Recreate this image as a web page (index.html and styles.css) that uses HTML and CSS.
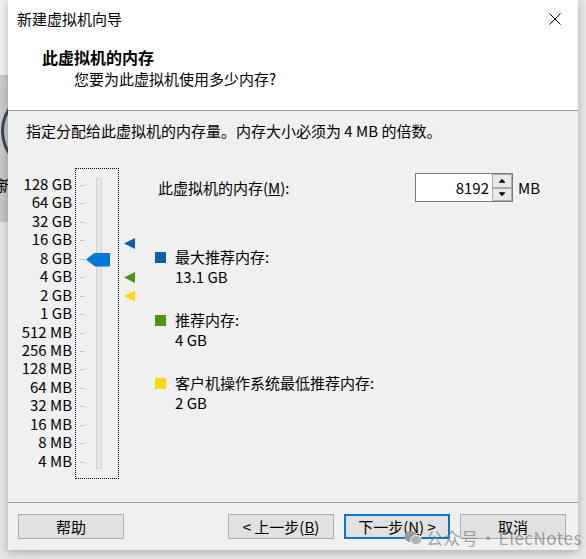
FILE: index.html
```html
<!DOCTYPE html>
<html lang="zh-CN">
<head>
  <meta charset="UTF-8">
  <title>新建虚拟机向导</title>
  <link rel="stylesheet" href="styles.css">
</head>
<body>
  <div class="behind">
    <span class="behind-ring"></span>
    <span class="behind-text">新</span>
  </div>

  <div class="dialog">
    <div class="top">
      <div class="titlebar">
        <span class="title">新建虚拟机向导</span>
        <svg class="close" width="12" height="12" viewBox="0 0 12 12">
          <path d="M0.5 0.5 L11.5 11.5 M11.5 0.5 L0.5 11.5" stroke="#000" stroke-width="1" fill="none"/>
        </svg>
      </div>
      <div class="header">
        <h1>此虚拟机的内存</h1>
        <p>您要为此虚拟机使用多少内存?</p>
      </div>
    </div>

    <div class="content">
      <p class="hint">指定分配给此虚拟机的内存量。内存大小必须为 4 MB 的倍数。</p>
      <div class="main">
        <div class="scale">
          <ul class="labels">
            <li>128 GB</li><li>64 GB</li><li>32 GB</li><li>16 GB</li>
            <li>8 GB</li><li>4 GB</li><li>2 GB</li><li>1 GB</li>
            <li>512 MB</li><li>256 MB</li><li>128 MB</li><li>64 MB</li>
            <li>32 MB</li><li>16 MB</li><li>8 MB</li><li>4 MB</li>
          </ul>
          <div class="slider">
            <ul class="ticks">
              <li></li><li></li><li></li><li></li><li></li><li></li><li></li><li></li>
              <li></li><li></li><li></li><li></li><li></li><li></li><li></li><li></li>
            </ul>
            <div class="track"></div>
            <div class="thumb" style="top: 83.5px"></div>
          </div>
          <div class="markers">
            <span class="marker marker-max" style="top: 70px"></span>
            <span class="marker marker-rec" style="top: 104px"></span>
            <span class="marker marker-min" style="top: 122.5px"></span>
          </div>
        </div>

        <div class="info">
          <div class="mem-row">
            <label class="mem-label">此虚拟机的内存(<u>M</u>):</label>
            <div class="spin">
              <input class="spin-value" value="8192">
              <div class="spin-btns">
                <span class="spin-btn"><i class="arrow-up"></i></span>
                <span class="spin-btn"><i class="arrow-down"></i></span>
              </div>
            </div>
            <span class="unit">MB</span>
          </div>

          <div class="legend">
            <div class="item">
              <i class="sq sq-max"></i>
              <div class="item-text">
                <div>最大推荐内存:</div>
                <div>13.1 GB</div>
              </div>
            </div>
            <div class="item">
              <i class="sq sq-rec"></i>
              <div class="item-text">
                <div>推荐内存:</div>
                <div>4 GB</div>
              </div>
            </div>
            <div class="item">
              <i class="sq sq-min"></i>
              <div class="item-text">
                <div>客户机操作系统最低推荐内存:</div>
                <div>2 GB</div>
              </div>
            </div>
          </div>
        </div>
      </div>
    </div>

    <div class="footer">
      <button class="btn">帮助</button>
      <div class="nav">
        <button class="btn">&lt; 上一步(<u>B</u>)</button>
        <button class="btn btn-default">下一步(<u>N</u>) &gt;</button>
        <button class="btn">取消</button>
      </div>
    </div>

    <div class="watermark">
      <svg width="18" height="16" viewBox="0 0 18 16">
        <ellipse cx="7" cy="6.5" rx="6.5" ry="5.5" fill="#9a9a9a"/>
        <ellipse cx="12" cy="10" rx="5.5" ry="4.6" fill="#b5b5b5" stroke="#f0f0f0" stroke-width="1"/>
      </svg>
      <span>公众号 · ElecNotes</span>
    </div>
  </div>
</body>
</html>
```

FILE: styles.css
```css
* { box-sizing: border-box; }

body {
  margin: 0;
  height: 559px;
  overflow: hidden;
  position: relative;
  background: #e9e9e9;
  font-family: "Noto Sans CJK SC", "Noto Sans", sans-serif;
  font-size: 15px;
  color: #000;
}

/* window behind the dialog, only a strip shows */
.behind {
  position: absolute;
  left: 0;
  top: 0;
  width: 40px;
  height: 559px;
  overflow: hidden;
  background: linear-gradient(#f3f3f3 0, #f3f3f3 75px, #cdcdcd 75px, #c6c6c6 222px, #e7e7e7 222px);
}
.behind-ring {
  position: absolute;
  left: 1px;
  top: 90px;
  width: 82px;
  height: 82px;
  border: 3px solid #3c4858;
  border-radius: 50%;
}
.behind-text {
  position: absolute;
  left: -3px;
  top: 175px;
  line-height: 20px;
}

.dialog {
  position: relative;
  z-index: 1;
  margin-left: 8px;
  width: 570px;
  height: 550px;
  background: #f0f0f0;
  display: flex;
  flex-direction: column;
  box-shadow: 0 2px 9px rgba(0,0,0,0.28);
}

/* white header */
.top {
  height: 111px;
  background: #fff;
  border-bottom: 1px solid #a0a0a0;
}
.titlebar {
  height: 38px;
  display: flex;
  align-items: center;
  justify-content: space-between;
  padding: 0 17px 0 9px;
}
.title { line-height: 20px; }
.header { padding: 9px 0 0 34px; }
.header h1 {
  margin: 0;
  font-size: 16px;
  font-weight: bold;
  line-height: 20px;
}
.header p {
  margin: 2px 0 0 32px;
  line-height: 20px;
}

/* body */
.content {
  flex: 1;
  padding: 10px 0 0 10px;
}
.hint {
  margin: 0 0 27px 8px;
  line-height: 20px;
}
.main { display: flex; }
.scale { display: flex; }

.labels {
  list-style: none;
  margin: 0;
  padding: 6.8px 0 0;
  width: 54px;
  text-align: right;
}
.labels li {
  height: 18.47px;
  line-height: 18.47px;
  white-space: nowrap;
}

.slider {
  position: relative;
  margin-left: 3px;
  width: 44px;
  height: 311px;
  border: 1px dotted #000;
}
.ticks {
  list-style: none;
  margin: 0;
  padding: 6.77px 0 0;
}
.ticks li {
  height: 18.47px;
  position: relative;
}
.ticks li::before {
  content: "";
  position: absolute;
  left: 4px;
  top: 9px;
  width: 5px;
  height: 1px;
  background: #c4c4c4;
}
.track {
  position: absolute;
  left: 20px;
  top: 9px;
  width: 6px;
  height: 291px;
  background: #e7e7e7;
  border: 1px solid #d4d4d4;
}
.thumb {
  position: absolute;
  left: 10px;
  width: 24px;
  height: 14px;
  background: #0078d7;
  clip-path: polygon(0 50%, 9px 0, 100% 0, 100% 100%, 9px 100%);
}

.markers {
  position: relative;
  width: 36px;
}
.marker {
  position: absolute;
  left: 5px;
  width: 11px;
  height: 11px;
  clip-path: polygon(0 50%, 100% 0, 100% 100%);
}
.marker-max, .sq-max { background: #0a62ae; }
.marker-rec, .sq-rec { background: #4b9711; }
.marker-min, .sq-min { background: #ffd800; }

.info { padding-top: 5px; }
.mem-row {
  display: flex;
  align-items: center;
  height: 29px;
}
.mem-label {
  width: 260px;
  padding-left: 3px;
  line-height: 20px;
}
.spin {
  display: flex;
  width: 98px;
  height: 29px;
  background: #fff;
  border: 1px solid #7a7a7a;
}
.spin-value {
  width: 75px;
  border: none;
  outline: none;
  padding: 0 2px 0 0;
  text-align: right;
  font: inherit;
  background: transparent;
}
.spin-btns {
  display: flex;
  flex-direction: column;
  padding: 0 0 0 1px;
}
.spin-btn {
  width: 20px;
  height: 13.5px;
  border: 1px solid #adadad;
  background: #e9e9e9;
  display: flex;
  align-items: center;
  justify-content: center;
}
.arrow-up, .arrow-down {
  width: 7px;
  height: 4px;
  background: #000;
}
.arrow-up { clip-path: polygon(50% 0, 100% 100%, 0 100%); }
.arrow-down { clip-path: polygon(0 0, 100% 0, 50% 100%); }
.unit {
  margin-left: 5px;
  line-height: 20px;
}

.legend {
  margin-top: 45px;
  display: flex;
  flex-direction: column;
  gap: 24px;
}
.item {
  display: flex;
  gap: 9px;
}
.sq {
  width: 11px;
  height: 11px;
  margin-top: 5px;
  flex: none;
}
.item-text { line-height: 19.5px; }

/* bottom buttons */
.footer {
  height: 48px;
  border-top: 1px solid #a0a0a0;
  display: flex;
  justify-content: space-between;
  padding: 11px 12px 0 10px;
}
.nav {
  display: flex;
  gap: 10px;
}
.btn {
  width: 106px;
  height: 25px;
  padding: 0;
  background: #e1e1e1;
  border: 1px solid #adadad;
  font: inherit;
  line-height: 21px;
  color: #000;
}
.btn-default { border: 2px solid #0078d7; }

.watermark {
  position: absolute;
  left: 396px;
  top: 527px;
  display: flex;
  align-items: center;
  gap: 4px;
  white-space: nowrap;
  font-size: 17px;
  line-height: 22px;
  color: rgba(125,125,125,0.7);
  letter-spacing: 0.5px;
  word-spacing: -3px;
  pointer-events: none;
}
```
